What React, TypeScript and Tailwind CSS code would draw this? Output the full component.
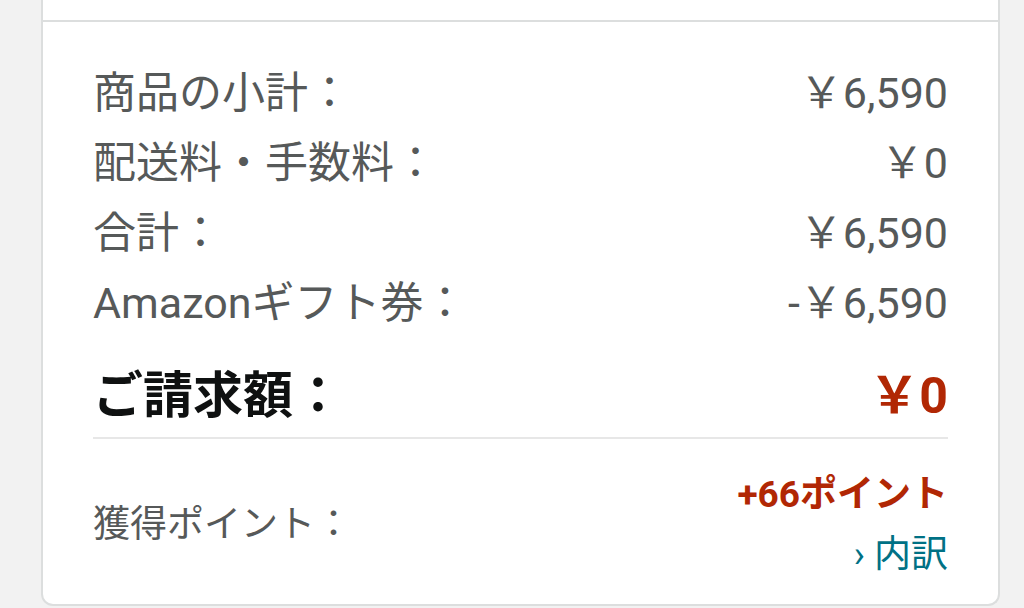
const FONT = { fontFamily: 'Roboto, "Noto Sans CJK JP", sans-serif' };

function Row({ label, value }: { label: string; value: string }) {
  return (
    <div className="flex h-[70px] items-center justify-between text-[43px] text-[#565959]">
      <span>{label}</span>
      <span>{value}</span>
    </div>
  );
}

export default function App() {
  return (
    <div className="h-[608px] w-[1024px] overflow-hidden bg-[#f2f2f2] pl-[41px] pr-[24px]" style={FONT}>
      <div className="h-[22px] border-x-2 border-b-2 border-[#dcdede] bg-white" />
      <div className="rounded-b-[12px] border-x-2 border-b-2 border-[#dcdede] bg-white px-[50px] pt-[36px] pb-[19px]">
        <Row label="商品の小計：" value="￥6,590" />
        <Row label="配送料・手数料：" value="￥0" />
        <Row label="合計：" value="￥6,590" />
        <Row label="Amazonギフト券：" value="-￥6,590" />
        <div className="mt-[20px] flex h-[76px] items-center justify-between text-[50px] font-bold">
          <span className="text-[#0f1111]">ご請求額：</span>
          <span className="text-[#b12704]">￥0</span>
        </div>
        <div className="mt-[3px] h-[2px] bg-[#e7e7e7]" />
        <div className="mt-[26px] flex items-center justify-between">
          <span className="text-[37px] text-[#565959]">獲得ポイント：</span>
          <div className="flex flex-col items-end">
            <span className="h-[60px] text-[37px] font-bold leading-[60px] text-[#b12704]">+66ポイント</span>
            <span className="h-[60px] text-[37px] leading-[60px] text-[#007185]">› 内訳</span>
          </div>
        </div>
      </div>
    </div>
  );
}
